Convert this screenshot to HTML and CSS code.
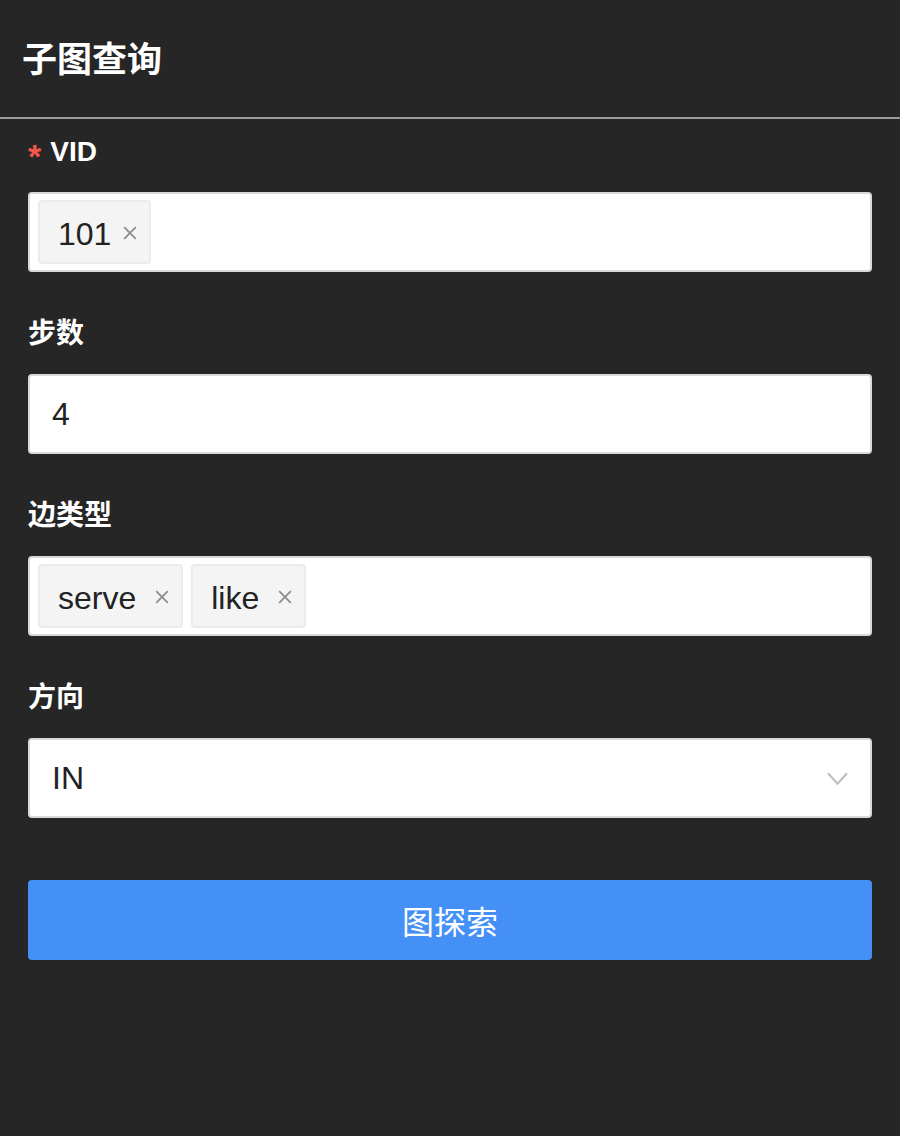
FILE: index.html
```html
<!DOCTYPE html>
<html lang="zh">
<head>
<meta charset="utf-8">
<title>子图查询</title>
<link rel="stylesheet" href="styles.css">
</head>
<body>
<div class="panel">
  <header class="header"><h1 class="title">子图查询</h1></header>
  <form class="form">
    <div class="item">
      <label class="label"><span class="req">*</span>VID</label>
      <div class="box tags">
        <span class="tag tag-tight">101<svg class="x" viewBox="0 0 12 12"><path d="M1 1L11 11M11 1L1 11"/></svg></span>
      </div>
    </div>
    <div class="item">
      <label class="label">步数</label>
      <div class="box field">4</div>
    </div>
    <div class="item">
      <label class="label">边类型</label>
      <div class="box tags">
        <span class="tag">serve<svg class="x" viewBox="0 0 12 12"><path d="M1 1L11 11M11 1L1 11"/></svg></span>
        <span class="tag">like<svg class="x" viewBox="0 0 12 12"><path d="M1 1L11 11M11 1L1 11"/></svg></span>
      </div>
    </div>
    <div class="item">
      <label class="label">方向</label>
      <div class="box field select">IN<svg class="chev" viewBox="0 0 20 12"><path d="M1 1L10 11L19 1"/></svg></div>
    </div>
    <button type="button" class="btn">图探索</button>
  </form>
</div>
</body>
</html>
```
FILE: styles.css
```css
html, body {
  margin: 0;
  padding: 0;
  background: #262626;
}
body {
  font-family: "Liberation Sans", "Noto Sans CJK SC", sans-serif;
  color: #fff;
  width: 900px;
  height: 1136px;
}
.header {
  height: 117px;
  border-bottom: 2px solid #9a9a9a;
  display: flex;
  align-items: center;
  padding-left: 22px;
}
.title {
  margin: 0;
  font-size: 35px;
  font-weight: bold;
  line-height: 40px;
  padding-top: 2px;
}
.form {
  padding: 13px 28px 0 28px;
}
.item {
  margin-bottom: 42px;
}
.label {
  display: flex;
  align-items: center;
  height: 40px;
  line-height: 40px;
  font-size: 28px;
  font-weight: bold;
  margin-bottom: 20px;
}
.req {
  color: #f2564b;
  margin-right: 9px;
  font-size: 34px;
  position: relative;
  top: 4px;
}
.box {
  box-sizing: border-box;
  height: 80px;
  background: #fff;
  border: 2px solid #d9d9d9;
  border-radius: 4px;
  color: #222;
  font-size: 32px;
}
.tags {
  display: flex;
  align-items: flex-start;
  gap: 8px;
  padding: 6px 8px;
}
.tag {
  box-sizing: border-box;
  height: 64px;
  display: flex;
  align-items: center;
  gap: 19px;
  padding: 4px 12px 0 18px;
  background: #f4f4f4;
  border: 2px solid #ebebeb;
  border-radius: 4px;
  color: #222;
}
.tag-tight {
  gap: 12px;
}
.x {
  width: 14px;
  height: 14px;
  stroke: #8c8c8c;
  stroke-width: 1.5;
  fill: none;
  position: relative;
  top: -1px;
}
.field {
  display: flex;
  align-items: center;
  padding: 0 22px;
}
.select {
  justify-content: space-between;
}
.chev {
  width: 21px;
  height: 13px;
  stroke: #bdbdbd;
  stroke-width: 2;
  fill: none;
}
.btn {
  display: block;
  width: 100%;
  height: 80px;
  margin-top: 62px;
  border: none;
  border-radius: 4px;
  background: #4590f6;
  color: #fff;
  font-family: "Liberation Sans", "Noto Sans CJK SC", sans-serif;
  font-size: 32px;
  padding: 0;
}
```
